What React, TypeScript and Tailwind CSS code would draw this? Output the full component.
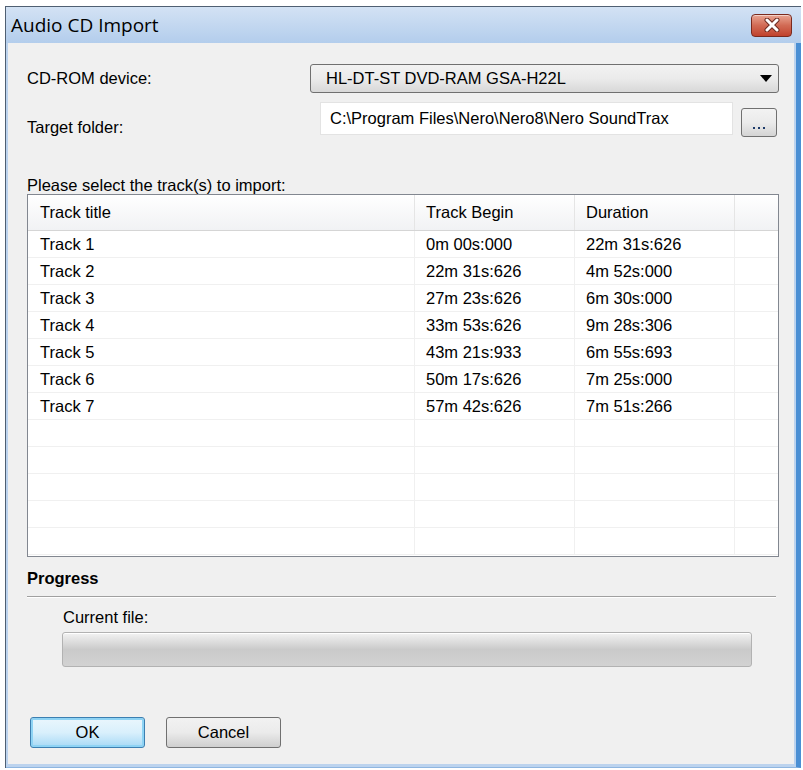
import React from 'react';

const tracks = [
  { title: 'Track 1', begin: '0m 00s:000', duration: '22m 31s:626' },
  { title: 'Track 2', begin: '22m 31s:626', duration: '4m 52s:000' },
  { title: 'Track 3', begin: '27m 23s:626', duration: '6m 30s:000' },
  { title: 'Track 4', begin: '33m 53s:626', duration: '9m 28s:306' },
  { title: 'Track 5', begin: '43m 21s:933', duration: '6m 55s:693' },
  { title: 'Track 6', begin: '50m 17s:626', duration: '7m 25s:000' },
  { title: 'Track 7', begin: '57m 42s:626', duration: '7m 51s:266' },
];

const emptyRows = 5;

const CloseIcon = () => (
  <svg width="20" height="14" viewBox="0 0 20 14">
    <path d="M5 2 L15 12 M15 2 L5 12" stroke="#6b2a20" strokeWidth="5" strokeLinecap="round" />
    <path d="M5 2 L15 12 M15 2 L5 12" stroke="#ffffff" strokeWidth="3" strokeLinecap="round" />
  </svg>
);

const TrackRow = ({ title, begin, duration }: { title?: string; begin?: string; duration?: string }) => (
  <div className="grid grid-cols-[387px_160px_160px_1fr] h-[27px] border-b border-[#f0f0f0]">
    <div className="pl-[12px] leading-[27px] border-r border-[#f0f0f0]">{title}</div>
    <div className="pl-[11px] leading-[27px] border-r border-[#f0f0f0]">{begin}</div>
    <div className="pl-[11px] leading-[27px] border-r border-[#f0f0f0]">{duration}</div>
    <div />
  </div>
);

export default function App() {
  return (
    <div className="w-[803px] h-[770px] bg-white overflow-hidden font-['Liberation_Sans',Arial,sans-serif] text-[16.5px] text-black">
      <div className="ml-[5px] mt-[6px] w-[796px] h-[762px] flex flex-col border-l border-t border-[#4f5f72] bg-[#bcd3ee]">
        {/* Title bar */}
        <div className="h-[36px] flex items-center justify-between pl-[5px] pr-[9px] bg-gradient-to-b from-[#d3e2f4] to-[#b3cdec]">
          <span className="font-['Open_Sans',sans-serif] text-[19px] text-black">Audio CD Import</span>
          <button className="w-[41px] h-[23px] rounded-[4px] border border-[#7a2a1e] bg-gradient-to-b from-[#e8a593] via-[#d16a54] to-[#c0412c] flex items-center justify-center shadow-[inset_0_1px_0_rgba(255,255,255,0.5)]">
            <CloseIcon />
          </button>
        </div>

        {/* Body frame */}
        <div className="flex-1 flex pl-[2px] pr-[2px] pb-[3px] border-r-[5px] border-r-[#4a8fd4] border-b-[1px] border-b-[#8fb6e0]">
          <div className="flex-1 bg-[#f0f0f0] pl-[19px] pr-[15px] flex flex-col">
            {/* CD-ROM device */}
            <div className="mt-[21px] flex items-center h-[29px]">
              <span className="w-[283px]">CD-ROM device:</span>
              <div className="flex-1 h-[29px] rounded-[3px] border border-[#707070] bg-gradient-to-b from-[#f2f2f2] via-[#ebebeb] to-[#d8d8d8] flex items-center justify-between pl-[15px] pr-[6px]">
                <span>HL-DT-ST DVD-RAM GSA-H22L</span>
                <svg width="12" height="7" viewBox="0 0 12 7">
                  <path d="M0 0 H12 L6 7 Z" fill="#000" />
                </svg>
              </div>
            </div>

            {/* Target folder */}
            <div className="mt-[9px] flex items-start">
              <span className="w-[293px] mt-[15px] leading-[20px]">Target folder:</span>
              <div className="w-[413px] h-[33px] bg-white border border-[#e3e3e3] flex items-center pl-[9px]">
                C:\Program Files\Nero\Nero8\Nero SoundTrax
              </div>
              <button className="ml-[8px] mt-[6px] w-[36px] h-[29px] rounded-[3px] border border-[#707070] bg-gradient-to-b from-[#f2f2f2] via-[#ebebeb] to-[#d4d4d4] flex items-end justify-center pb-[7px]">
                <span className="flex gap-[3px]">
                  <span className="w-[2px] h-[2px] bg-[#1c3a6a]" />
                  <span className="w-[2px] h-[2px] bg-[#1c3a6a]" />
                  <span className="w-[2px] h-[2px] bg-[#1c3a6a]" />
                </span>
              </button>
            </div>

            <div className="mt-[39px] h-[18px] leading-[18px]">Please select the track(s) to import:</div>

            {/* Track list */}
            <div className="mt-0 h-[363px] border border-[#828790] bg-white overflow-hidden">
              <div className="grid grid-cols-[387px_160px_160px_1fr] h-[36px] bg-gradient-to-b from-[#ffffff] to-[#f1f2f4] border-b border-[#d5d5d5]">
                <div className="pl-[12px] leading-[35px] border-r border-[#e5e5e5]">Track title</div>
                <div className="pl-[11px] leading-[35px] border-r border-[#e5e5e5]">Track Begin</div>
                <div className="pl-[11px] leading-[35px] border-r border-[#e5e5e5]">Duration</div>
                <div />
              </div>
              {tracks.map((t) => (
                <TrackRow key={t.title} {...t} />
              ))}
              {Array.from({ length: emptyRows }).map((_, i) => (
                <TrackRow key={i} />
              ))}
            </div>

            {/* Progress */}
            <div className="mt-[11px] h-[20px] leading-[20px] font-bold">Progress</div>
            <div className="mt-[8px] h-[2px] border-t border-[#a0a0a0] border-b border-b-white mr-[3px]" />
            <div className="mt-[9px] ml-[36px] h-[20px] leading-[20px]">Current file:</div>
            <div className="mt-[5px] ml-[35px] mr-[27px] h-[35px] rounded-[3px] border border-[#b2b2b2] bg-gradient-to-b from-[#f3f3f3] via-[#cacaca] to-[#d2d2d2] shadow-[inset_0_1px_0_#ffffff]" />

            {/* Buttons */}
            <div className="mt-[50px] flex gap-[21px] ml-[3px]">
              <button className="w-[115px] h-[31px] rounded-[3px] border border-[#3c7fb1] bg-gradient-to-b from-[#eaf6fd] via-[#d9f0fc] to-[#a7d9f5] shadow-[inset_0_0_0_2px_#8ed3f4] flex items-center justify-center">
                OK
              </button>
              <button className="w-[115px] h-[31px] rounded-[3px] border border-[#707070] bg-gradient-to-b from-[#f2f2f2] via-[#ebebeb] to-[#cfcfcf] flex items-center justify-center">
                Cancel
              </button>
            </div>
          </div>
        </div>
      </div>
    </div>
  );
}
